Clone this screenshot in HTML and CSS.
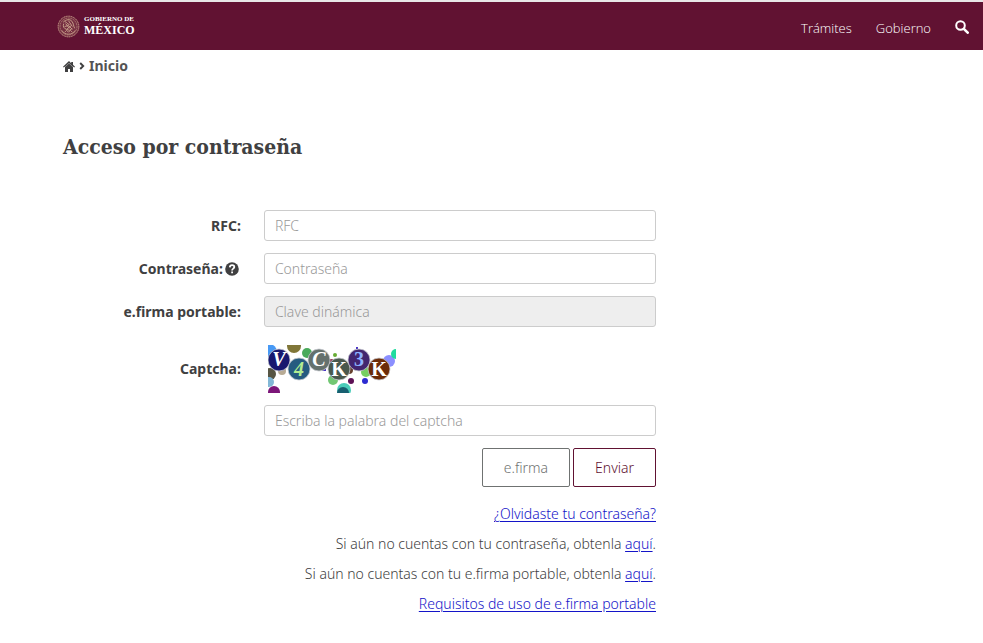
FILE: index.html
```html
<!DOCTYPE html>
<html lang="es">
<head>
<meta charset="utf-8">
<title>Acceso por contraseña</title>
<link rel="stylesheet" href="styles.css">
</head>
<body>
<header class="navbar">
  <a class="brand" href="#">
    <svg class="seal" viewBox="0 0 24 24" aria-hidden="true">
      <circle cx="12" cy="12" r="11" fill="#8a4a50" opacity=".5"/>
      <g fill="none" stroke="#c9a28c">
        <circle cx="12" cy="12" r="10.8" stroke-width="1" stroke-dasharray="1.3 .6"/>
        <circle cx="12" cy="12" r="8.8" stroke-width=".8" stroke-dasharray="2 .7" opacity=".75"/>
        <path d="M5 16c1.500 3 4.500 4 7 4s5.500-1 7-4M8 18l2-2 2 2 2-2 2 2" stroke-width=".9"/>
        <path d="M6.500 7.500c3-3 7-3.500 9-1 2 2.500 1.500 5 3 7.500M8 6.500c2 1 2.500 3 5 3.500M7 9c-1 3 0 5 3 6l5-4M9 9l4 5M12 6l4 6M8 12l4-1 4 4M10 15l3 1 3-2" stroke-width="1"/>
      </g>
    </svg>
    <span class="brand-text"><span class="brand-top">GOBIERNO DE</span><span class="brand-main">MÉXICO</span></span>
  </a>
  <nav class="menu">
    <a href="#">Trámites</a>
    <a href="#">Gobierno</a>
    <a href="#" aria-label="Buscar">
      <svg class="search" viewBox="0 0 14 14" aria-hidden="true"><circle cx="5.500" cy="5.500" r="4.300" fill="none" stroke="#fff" stroke-width="2"/><path d="M8.800 8.800L12.700 12.700" stroke="#fff" stroke-width="2.600" stroke-linecap="round"/></svg>
    </a>
  </nav>
</header>
<main class="page">
  <nav class="breadcrumb">
    <a href="#" aria-label="Portada"><svg class="home" viewBox="0 0 12 11" aria-hidden="true"><path d="M6 0L0 5.800l.8.800L2 5.600V11h3V8h2v3h3V5.600l1.200 1 .8-.8-2-2V1H8.200v1.300z" fill="#404041"/><path d="M1.700 6.300L6 2.200l4.300 4.100" fill="none" stroke="#fff" stroke-width=".4"/></svg></a>
    <svg class="chevron" viewBox="0 0 6 8" aria-hidden="true"><path d="M1.200 1l3 3-3 3" fill="none" stroke="#404041" stroke-width="1.900"/></svg>
    <a href="#">Inicio</a>
  </nav>
  <h1>Acceso por contraseña</h1>
  <form class="login">
    <label for="rfc">RFC:</label>
    <input id="rfc" type="text" placeholder="RFC">
    <label for="pass">Contraseña:<svg class="help" viewBox="0 0 14 14" aria-hidden="true"><circle cx="7" cy="7" r="6.800" fill="#404041"/><path d="M4.800 5.400C4.900 3.900 5.800 3.200 7.100 3.200c1.300 0 2.200.7 2.200 1.900 0 1.600-2.200 1.500-2.200 3.300M7.100 9.400v1.800" fill="none" stroke="#fff" stroke-width="1.800"/></svg></label>
    <input id="pass" type="password" placeholder="Contraseña">
    <label for="portable">e.firma portable:</label>
    <input id="portable" type="text" placeholder="Clave dinámica" disabled>
    <label class="captcha-label" for="captcha">Captcha:</label>
    <svg class="captcha" viewBox="0 0 128 48" role="img" aria-label="Captcha">
      <circle cx="1" cy="7" r="8" fill="#4799f5"/>
      <circle cx="26" cy="1" r="7" fill="#807638"/>
      <circle cx="39" cy="8" r="5" fill="#4aaa5b"/>
      <circle cx="2" cy="29" r="6" fill="#575544"/>
      <circle cx="14" cy="26" r="4" fill="#b8ab95"/>
      <circle cx="1" cy="37" r="5" fill="#82b7d6"/>
      <circle cx="6" cy="47" r="6" fill="#7c1679"/>
      <circle cx="65" cy="35" r="5" fill="#71c773"/>
      <circle cx="63" cy="18" r="4" fill="#96304f"/>
      <circle cx="81" cy="25" r="4" fill="#66402e"/>
      <circle cx="67" cy="10" r="2" fill="#67ac34"/>
      <circle cx="76" cy="45" r="7" fill="#4accb9"/>
      <circle cx="75" cy="48" r="6" fill="#175f70"/>
      <circle cx="83" cy="36" r="3" fill="#5d1155"/>
      <circle cx="97" cy="36" r="3" fill="#2d2bd1"/>
      <circle cx="98" cy="27" r="5" fill="#77cf62"/>
      <circle cx="121" cy="16" r="6" fill="#8b8fff"/>
      <circle cx="128" cy="9" r="5" fill="#20dc9e"/>
      <path d="M54 25h4M88 3h2" stroke="#4a36c5" stroke-width="2"/>
      <g stroke="#c8cad0" stroke-width=".8">
        <circle cx="11" cy="15" r="11" fill="#18176f"/>
        <circle cx="31" cy="24" r="11" fill="#265b80"/>
        <circle cx="51" cy="15" r="11" fill="#65716d"/>
        <circle cx="71" cy="24" r="11" fill="#49584d"/>
        <circle cx="91" cy="15" r="11" fill="#42266f"/>
        <circle cx="111" cy="24" r="11" fill="#6b2b08"/>
      </g>
      <g class="captcha-text">
        <text x="11" y="21" class="slant">V</text><text x="31" y="31" class="slant four">4</text><text x="51" y="21" class="slant">C</text><text x="71" y="31">K</text><text x="91" y="21" class="three">3</text><text x="111" y="31">K</text>
      </g>
    </svg>
    <input id="captcha" class="field" type="text" placeholder="Escriba la palabra del captcha">
    <div class="actions field">
      <button type="button" class="btn secondary">e.firma</button>
      <button type="submit" class="btn">Enviar</button>
    </div>
    <div class="links">
      <p><a href="#">¿Olvidaste tu contraseña?</a></p>
      <p>Si aún no cuentas con tu contraseña, obtenla <a href="#">aquí</a>.</p>
      <p>Si aún no cuentas con tu e.firma portable, obtenla <a href="#">aquí</a>.</p>
      <p><a href="#">Requisitos de uso de e.firma portable</a></p>
    </div>
  </form>
</main>
</body>
</html>
```
FILE: styles.css
```css
* { box-sizing: border-box; }
body {
  margin: 0;
  background: #fff;
  color: #404041;
  font-family: "Noto Sans", "Open Sans", sans-serif;
  font-size: 14px;
  font-weight: 300;
  line-height: 20px;
}
.navbar {
  display: flex;
  align-items: center;
  justify-content: space-between;
  height: 50px;
  padding: 0 14px 0 57px;
  border-top: 2px solid #e8e6e7;
  background: #611232;
}
.brand { display: flex; align-items: center; gap: 4px; color: #fff; text-decoration: none; }
.seal { width: 23px; height: 23px; }
.brand-text { display: flex; flex-direction: column; font-family: "Liberation Serif", serif; font-weight: 700; }
.brand-top { font-size: 7px; line-height: 8px; }
.brand-main { font-size: 12px; line-height: 14px; }
.menu { display: flex; align-items: center; gap: 24px; padding-top: 4px; font-family: "Open Sans", sans-serif; font-size: 13px; }
.menu a { color: #fff; text-decoration: none; }
.search { display: block; width: 14px; height: 14px; margin-bottom: 2px; }
.page { padding: 6px 24px 24px 63px; }
.breadcrumb { display: flex; align-items: center; gap: 4px; font-weight: 700; }
.breadcrumb a { color: #545454; text-decoration: none; }
.home { display: block; width: 12px; height: 11px; }
.chevron { width: 6px; height: 8px; }
h1 {
  margin: 56px 0 48px;
  font-family: "DejaVu Serif Condensed", "DejaVu Serif", serif;
  font-size: 21px;
  font-weight: 700;
  line-height: 30px;
}
.login {
  display: grid;
  grid-template-columns: 30% 1fr;
  column-gap: 23px;
  row-gap: 12px;
  align-items: center;
  max-width: 593px;
}
label { font-weight: 700; text-align: right; }
.captcha-label { padding-top: 6px; }
.help { width: 14px; height: 14px; margin: 0 2px; vertical-align: -2px; }
input {
  width: 100%;
  height: 31px;
  padding: 0 10px;
  border: 1px solid #ccc;
  border-radius: 3px;
  background: #fff;
  color: inherit;
  font: inherit;
}
input::placeholder { color: #999; opacity: 1; }
input:disabled { background: #eee; }
.captcha { width: 128px; height: 48px; margin: 6px 4px 0; overflow: hidden; }
.captcha-text { fill: #fff; font-family: "Liberation Serif", serif; font-size: 20px; font-weight: 700; text-anchor: middle; }
.slant { font-style: italic; }
.four { fill: #b2ed91; }
.three { fill: #8eb4ff; }
.field { grid-column: 2; }
.actions { display: flex; justify-content: flex-end; gap: 3px; }
.btn {
  height: 39px;
  padding: 0 21px;
  border: 1px solid #611232;
  border-radius: 2px;
  background: #fff;
  color: #611232;
  font: inherit;
}
.secondary { border-color: #6f7271; color: #6f7271; }
.links { grid-column: 1 / -1; text-align: right; }
.links p { margin: 0; line-height: 30px; }
.links a { color: #1414c8; text-underline-offset: 2px; }
```
